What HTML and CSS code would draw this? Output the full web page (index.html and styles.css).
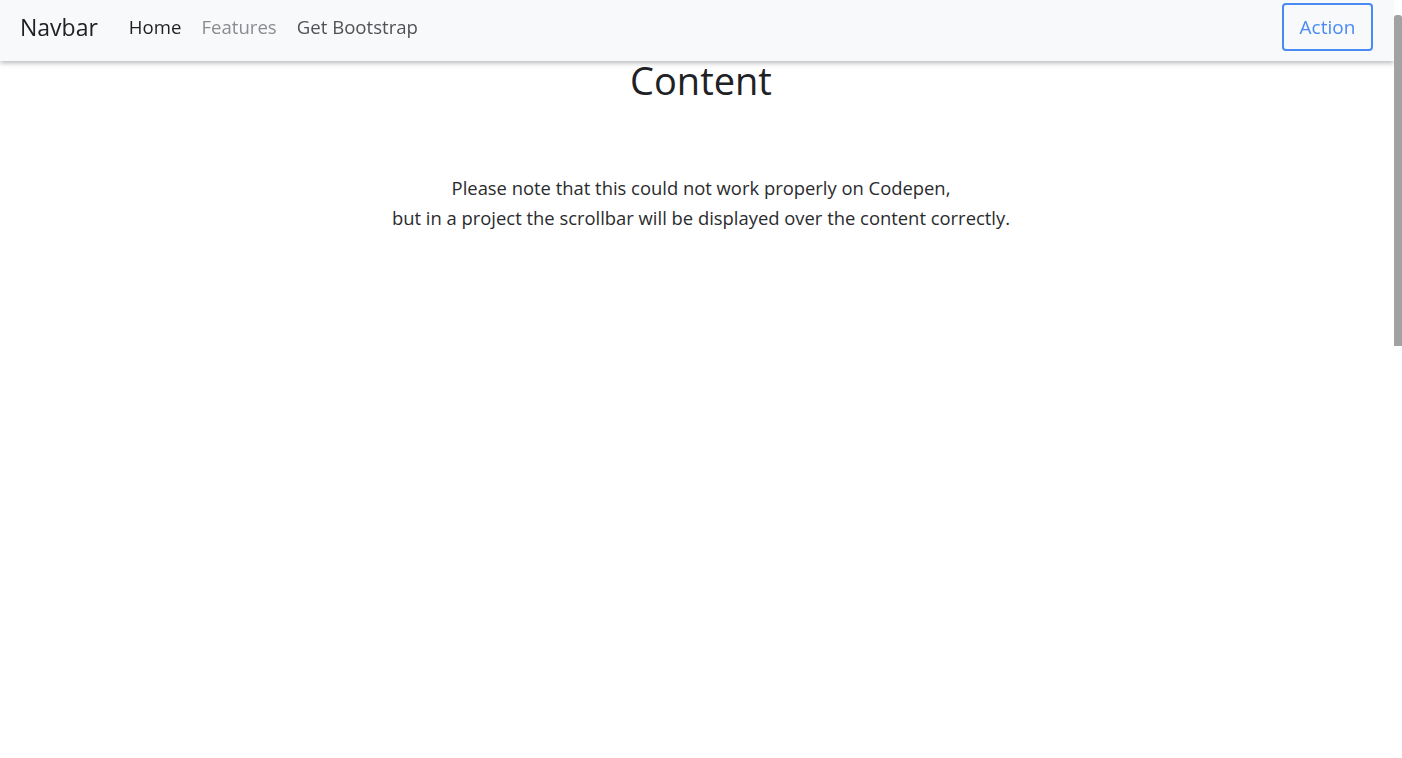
FILE: index.html
```html
<!DOCTYPE html>
<html lang="en">
<head>
<meta charset="utf-8">
<title>Navbar</title>
<link rel="stylesheet" href="styles.css">
</head>
<body>
<nav class="navbar">
  <a class="brand" href="#">Navbar</a>
  <ul class="nav">
    <li><a class="nav-link active" href="#">Home</a></li>
    <li><a class="nav-link muted" href="#">Features</a></li>
    <li><a class="nav-link" href="#">Get Bootstrap</a></li>
  </ul>
  <button class="btn-action" type="button">Action</button>
</nav>
<main class="content">
  <h1 class="title">Content</h1>
  <p class="note">Please note that this could not work properly on Codepen,<br>but in a project the scrollbar will be displayed over the content correctly.</p>
</main>
<div class="scroll-track"><div class="scroll-thumb"></div></div>
</body>
</html>
```

FILE: styles.css
```css
html, body {
  margin: 0;
  padding: 0;
  height: 100%;
  overflow: hidden;
  background: #ffffff;
}
body {
  font-family: "Open Sans", "Liberation Sans", sans-serif;
  color: #212529;
}
.navbar {
  position: fixed;
  top: 0;
  left: 0;
  right: 8px;
  height: 61px;
  box-sizing: border-box;
  display: flex;
  align-items: flex-start;
  padding: 3px 20px 0 20px;
  background: #f8f9fa;
  box-shadow: 0 2px 5px rgba(0, 0, 0, 0.28);
  z-index: 10;
}
.brand {
  font-size: 23px;
  line-height: 48px;
  color: #202124;
  text-decoration: none;
  margin-right: 31px;
}
.nav {
  display: flex;
  list-style: none;
  margin: 0;
  padding: 0;
  gap: 20px;
  flex: 1;
}
.nav-link {
  display: block;
  font-size: 18.6px;
  line-height: 48px;
  color: #505256;
  text-decoration: none;
}
.nav-link.active { color: #1e1f22; }
.nav-link.muted { color: #8a8c90; }
.btn-action {
  height: 48px;
  width: 91px;
  margin-right: 1px;
  border: 2px solid #4a8af4;
  border-radius: 4px;
  background: transparent;
  color: #4a8af4;
  font-family: inherit;
  font-size: 19px;
  padding: 0;
}
.content {
  padding-top: 56px;
  text-align: center;
}
.title {
  margin: 0;
  font-size: 38px;
  font-weight: 400;
  line-height: 48px;
  color: #202124;
}
.note {
  margin: 69px 0 0 0;
  font-size: 18.4px;
  line-height: 30px;
  color: #2a2b2e;
}
.scroll-track {
  position: fixed;
  top: 0;
  right: 0;
  width: 8px;
  height: 100%;
  background: #ffffff;
  z-index: 20;
}
.scroll-thumb {
  margin-top: 15px;
  height: 331px;
  background: #a2a2a2;
  border-radius: 3px 3px 0 0;
}
```
